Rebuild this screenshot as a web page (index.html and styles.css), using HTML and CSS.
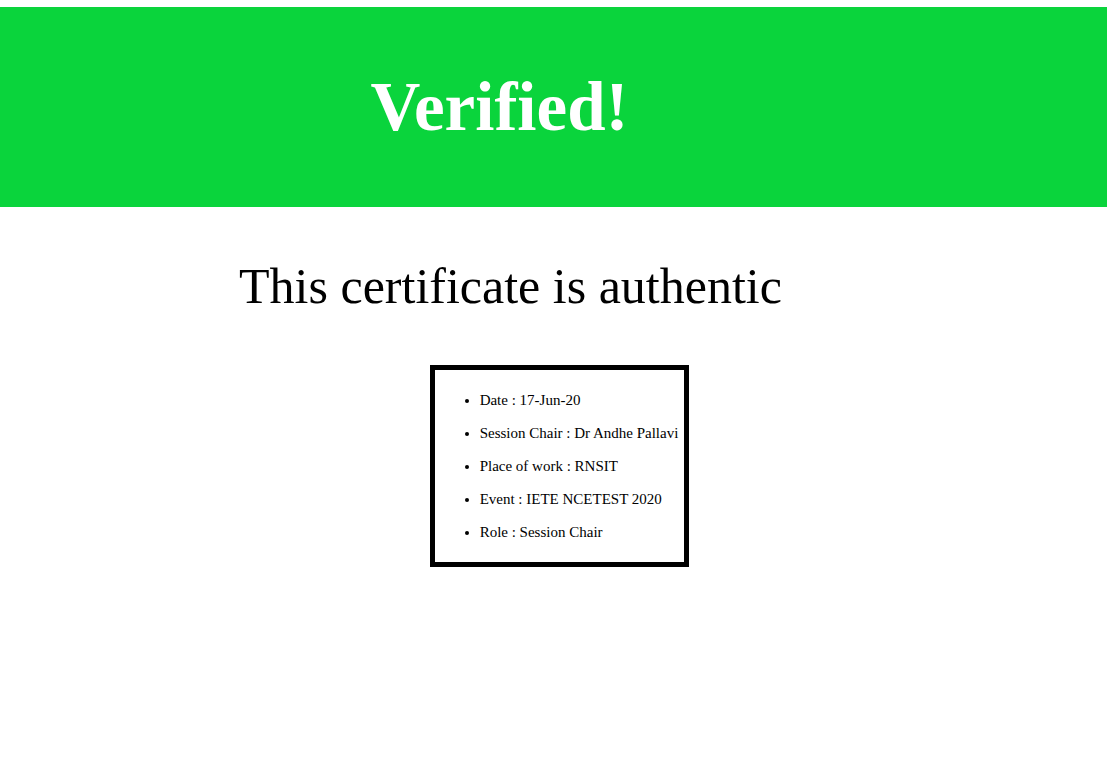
FILE: index.html
```html
<!DOCTYPE html>
<html>
<head>
<meta charset="utf-8">
<link rel="stylesheet" href="styles.css">
</head>
<body>
<header class="banner"><h1 class="banner-title">Verified!</h1></header>
<h2 class="status">This certificate is authentic</h2>
<div class="card-wrap">
  <div class="card">
    <ul class="details">
      <li>Date : 17-Jun-20</li>
      <li>Session Chair : Dr Andhe Pallavi</li>
      <li>Place of work : RNSIT</li>
      <li>Event : IETE NCETEST 2020</li>
      <li>Role : Session Chair</li>
    </ul>
  </div>
</div>
</body>
</html>
```

FILE: styles.css
```css
html, body {
  margin: 0;
  padding: 0;
  background: #fff;
  font-family: "Liberation Serif", "Times New Roman", serif;
  color: #000;
}
.banner {
  margin-top: 7px;
  height: 200px;
  background: #0ad43c;
  display: flex;
  align-items: center;
  justify-content: center;
  padding-right: 108px;
}
.banner-title {
  margin: 0;
  font-size: 69px;
  font-weight: bold;
  color: #fff;
}
.status {
  margin: 50px 0 0 0;
  padding-right: 86px;
  text-align: center;
  font-size: 50px;
  font-weight: normal;
}
.card-wrap {
  display: flex;
  justify-content: center;
  padding-left: 12px;
  margin-top: 50px;
}
.card {
  border: 5px solid #000;
}
.details {
  margin: 0;
  padding: 22px 6px 21px 45px;
  font-size: 15px;
  line-height: 17px;
}
.details li {
  margin-bottom: 16px;
}
.details li:last-child {
  margin-bottom: 0;
}
```
